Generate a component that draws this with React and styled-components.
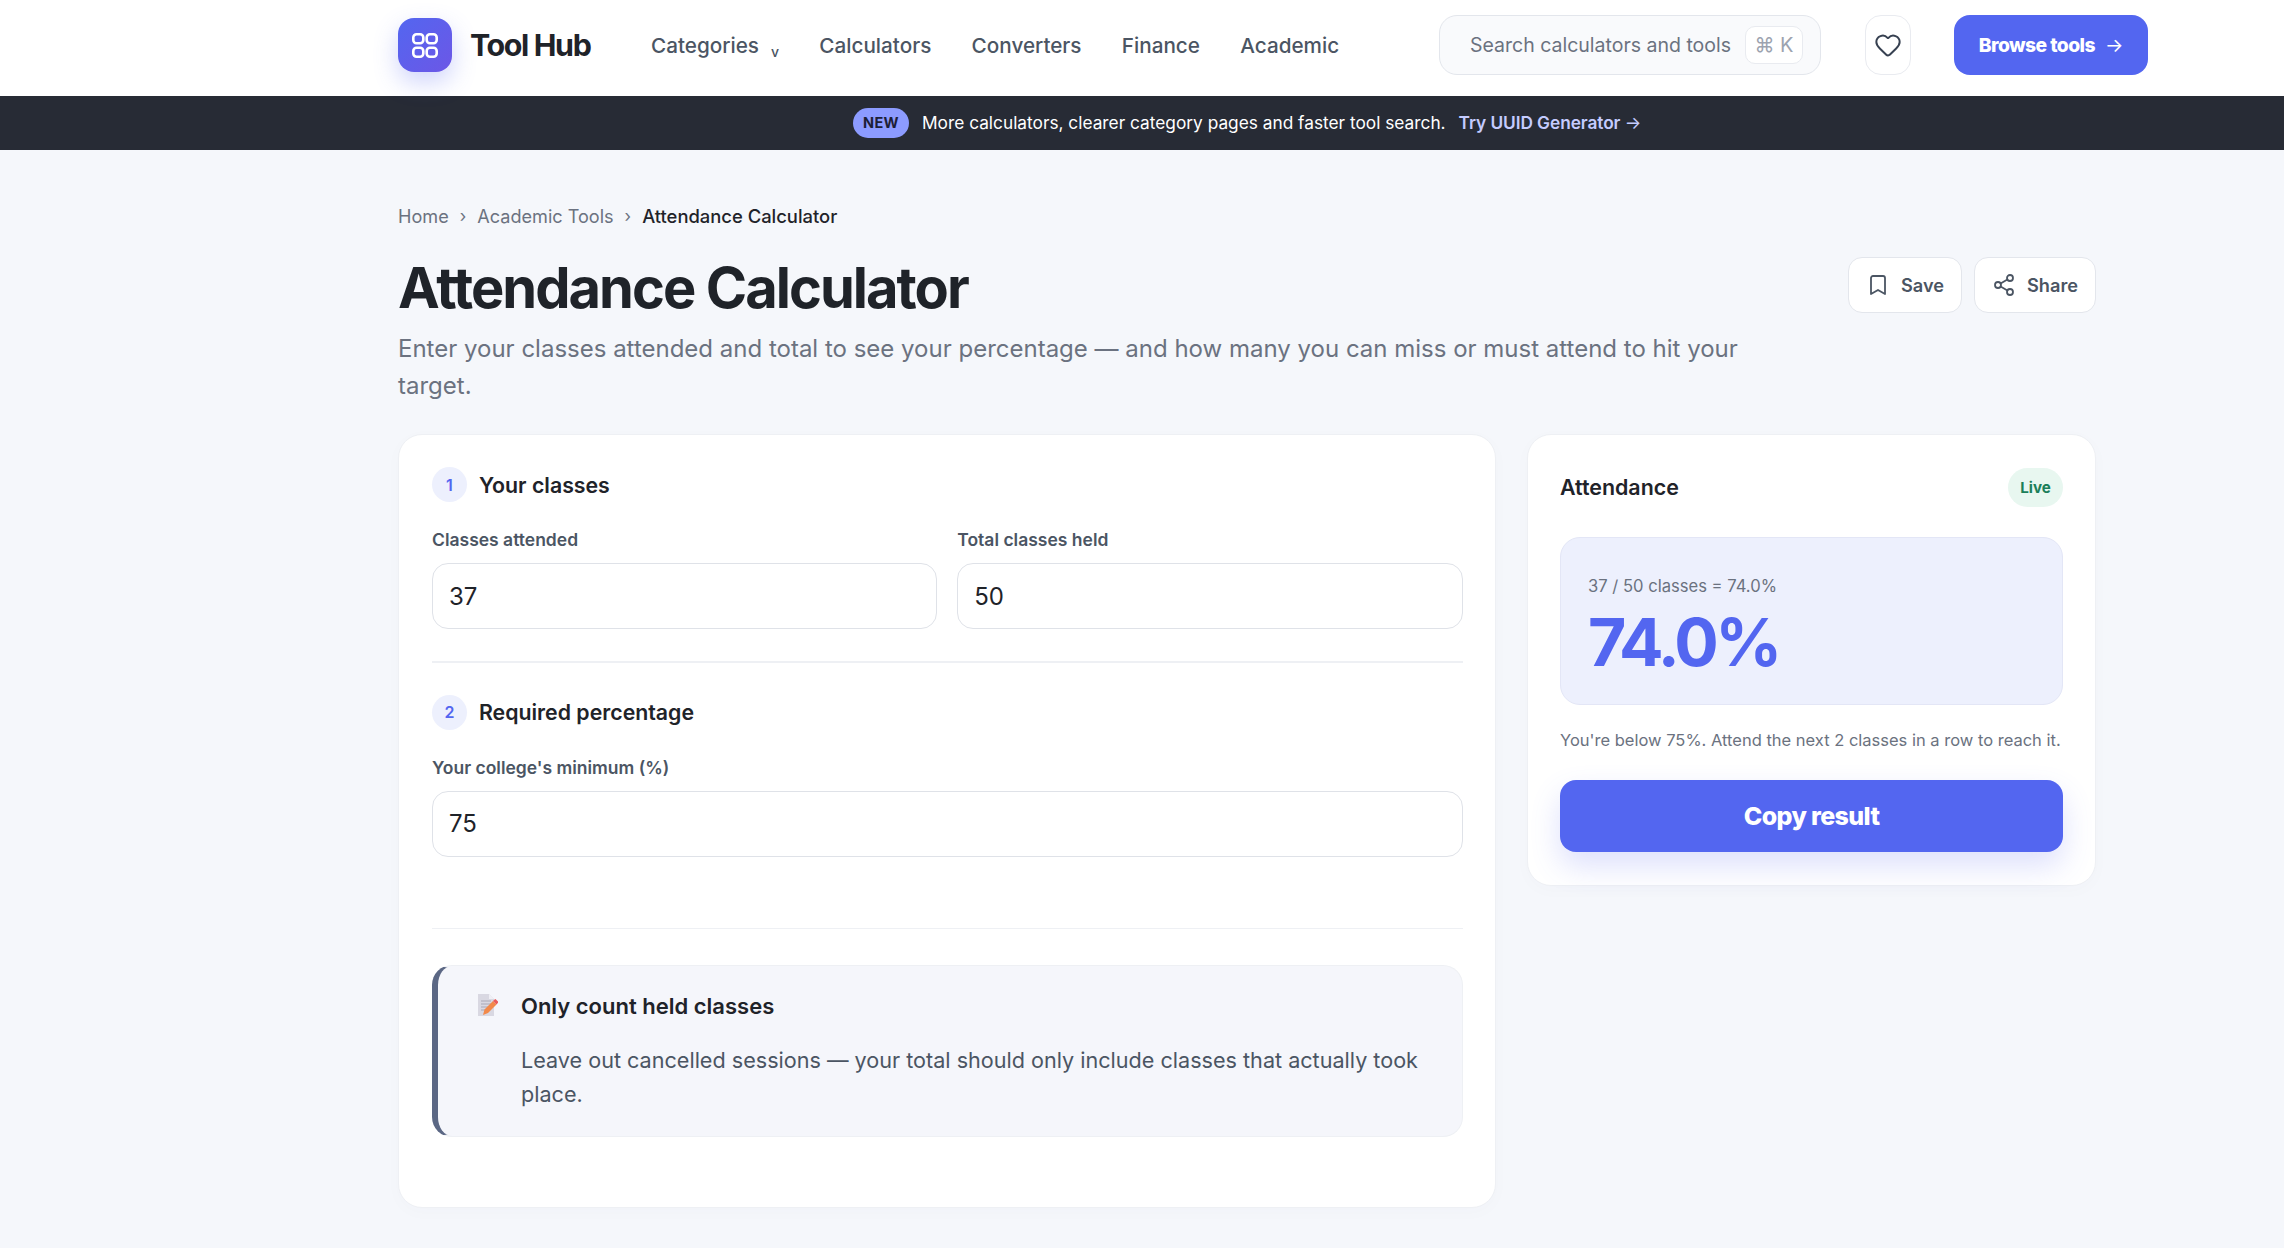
import React from 'react';
import styled, { createGlobalStyle } from 'styled-components';
import { Heart, Bookmark, Share2 } from 'lucide-react';

const GlobalStyle = createGlobalStyle`
  * { box-sizing: border-box; }
  html, body { margin: 0; padding: 0; }
  body {
    background: #f5f7fb;
    color: #1f2329;
    font-family: Inter, "Noto Sans", sans-serif;
    -webkit-font-smoothing: antialiased;
  }
`;

const Header = styled.header`
  height: 96px;
  background: #fff;
  padding: 0 0 6px 398px;
  display: flex;
  align-items: center;
`;

const LogoMark = styled.div`
  width: 54px;
  height: 54px;
  border-radius: 16px;
  background: linear-gradient(135deg, #5366f0, #6c57e6);
  box-shadow: 0 10px 24px rgba(83, 102, 240, 0.28);
  display: flex;
  align-items: center;
  justify-content: center;
`;

const Brand = styled.div`
  margin-left: 18px;
  width: 181px;
  font-size: 30.4px;
  font-weight: 700;
  letter-spacing: -0.045em;
  color: #1f2329;
`;

const Nav = styled.nav`
  display: flex;
  align-items: center;
  gap: 40.3px;
  width: 788px;
`;

const NavLink = styled.a`
  font-size: 20.7px;
  font-weight: 500;
  color: #4b5563;
  white-space: nowrap;
`;

const Caret = styled.span`
  margin-left: 12px;
  font-size: 14px;
  position: relative;
  top: 4px;
`;

const Search = styled.div`
  width: 382px;
  height: 60px;
  border: 1.5px solid #e3e6ec;
  border-radius: 18px;
  background: #f9fafc;
  display: flex;
  align-items: center;
  justify-content: space-between;
  padding: 0 17px 0 30px;
`;

const SearchText = styled.span`
  font-size: 19.5px;
  color: #6b7280;
  white-space: nowrap;
`;

const Kbd = styled.span`
  width: 58px;
  height: 38px;
  flex-shrink: 0;
  border: 1.5px solid #e9ebf0;
  border-radius: 10px;
  background: #fff;
  color: #9ca3af;
  font-size: 20px;
  display: flex;
  align-items: center;
  justify-content: center;
  gap: 4px;
`;

const HeartButton = styled.button`
  width: 46px;
  height: 60px;
  margin-left: 44px;
  border: 1.5px solid #e9ebf0;
  border-radius: 16px;
  background: #fff;
  color: #374151;
  padding: 0;
  display: flex;
  align-items: center;
  justify-content: center;
`;

const BrowseButton = styled.button`
  width: 194px;
  height: 60px;
  margin-left: 43px;
  border: 0;
  border-radius: 16px;
  background: #5366f0;
  color: #fff;
  font-family: inherit;
  font-size: 19.3px;
  font-weight: 800;
  letter-spacing: -0.03em;
  white-space: nowrap;
  span { margin-left: 10px; font-weight: 400; letter-spacing: 0; }
`;

const Banner = styled.div`
  height: 54px;
  background: #272b35;
  padding: 0 0 1px 853px;
  display: flex;
  align-items: center;
  color: #fff;
  font-size: 17.3px;
  white-space: nowrap;
`;

const NewPill = styled.span`
  width: 56px;
  height: 30px;
  border-radius: 15px;
  background: #8c9bff;
  color: #1c2036;
  font-size: 14.5px;
  font-weight: 700;
  letter-spacing: 0.03em;
  display: flex;
  align-items: center;
  justify-content: center;
  margin-right: 13px;
`;

const BannerLink = styled.a`
  margin-left: 13px;
  color: #c4cbff;
  font-weight: 600;
  letter-spacing: -0.004em;
  span { font-weight: 400; }
`;

const Main = styled.main`
  width: 1698px;
  margin-left: 398px;
  padding: 52px 0 42px;
`;

const Breadcrumb = styled.div`
  display: flex;
  align-items: center;
  height: 28px;
  font-size: 18.1px;
  color: #6b7280;
`;

const Sep = styled.span`
  margin: 0 11px;
  font-size: 17px;
`;

const Current = styled.span`
  color: #1f2329;
  font-weight: 500;
  font-size: 18.4px;
`;

const TitleRow = styled.div`
  display: flex;
  justify-content: space-between;
  align-items: flex-start;
  margin-top: 26px;
`;

const Title = styled.h1`
  margin: 0;
  font-size: 56px;
  line-height: 64px;
  font-weight: 700;
  letter-spacing: -0.035em;
  color: #1f2329;
`;

const Actions = styled.div`
  display: flex;
  gap: 12px;
  margin-top: 1px;
`;

const ActionButton = styled.button`
  width: ${p => p.$w}px;
  height: 56px;
  border: 1.5px solid #e3e6ec;
  border-radius: 14px;
  background: #fff;
  color: #4b5563;
  font-family: inherit;
  font-size: 18.2px;
  font-weight: 600;
  display: flex;
  align-items: center;
  justify-content: center;
  gap: 11px;
`;

const Subtitle = styled.p`
  margin: 10px 0 30px;
  max-width: 1380px;
  font-size: 24px;
  line-height: 37px;
  color: #6b7280;
`;

const Columns = styled.div`
  display: grid;
  grid-template-columns: 1098px 569px;
  gap: 31px;
  align-items: start;
`;

const Card = styled.section`
  background: #fff;
  border: 1.5px solid #eef0f4;
  border-radius: 24px;
  padding: 32px 32.5px 32px 33px;
  box-shadow: 0 4px 18px rgba(31, 41, 80, 0.02);
`;

const SideCard = styled(Card)`
  padding: 33px 32px 33px;
`;

const StepHead = styled.div`
  display: flex;
  align-items: center;
  gap: 12px;
  height: 35px;
`;

const StepNum = styled.span`
  width: 35px;
  height: 35px;
  border-radius: 50%;
  background: #edf0fd;
  color: #5366f0;
  font-size: 16px;
  font-weight: 600;
  display: flex;
  align-items: center;
  justify-content: center;
`;

const StepTitle = styled.h2`
  margin: 0;
  font-size: 21.3px;
  font-weight: 600;
  color: #1f2329;
`;

const Fields = styled.div`
  display: grid;
  grid-template-columns: ${p => (p.$cols === 2 ? '1fr 1fr' : '1fr')};
  gap: 20px;
  margin-top: 25px;
`;

const Label = styled.label`
  display: block;
  font-size: 17.5px;
  line-height: 26px;
  font-weight: 600;
  color: #4b5563;
  margin-bottom: 10px;
`;

const Input = styled.input`
  display: block;
  width: 100%;
  height: 66px;
  border: 1.5px solid #dfe2e8;
  border-radius: 16px;
  background: #fff;
  padding: 0 16px;
  font-family: inherit;
  font-size: 24px;
  color: #1f2329;
  outline: none;
`;

const Divider = styled.hr`
  border: 0;
  height: 1.5px;
  background: #eef0f4;
  margin: ${p => p.$top}px 0 ${p => p.$bottom}px;
`;

const Note = styled.div`
  height: 172px;
  background: #f5f6fb;
  border: 1.5px solid #eef0f4;
  border-left: 6px solid #5b6784;
  border-radius: 20px;
  padding: 24px 24px 0 40px;
  margin-bottom: 38px;
  display: grid;
  grid-template-columns: 20px 1fr;
  grid-template-rows: auto 1fr;
  column-gap: 23px;
`;

const NoteTitle = styled.div`
  font-size: 22px;
  line-height: 32px;
  font-weight: 600;
  color: #1f2329;
`;

const NoteBody = styled.p`
  grid-column: 2;
  margin: 22px 0 0;
  font-size: 21.6px;
  line-height: 33.5px;
  color: #4b5563;
`;

const CardHead = styled.div`
  display: flex;
  justify-content: space-between;
  align-items: center;
  height: 39px;
`;

const CardTitle = styled.h3`
  margin: 0 0 2px;
  font-size: 21.4px;
  font-weight: 600;
  color: #1f2329;
`;

const LivePill = styled.span`
  width: 55px;
  height: 39px;
  border-radius: 20px;
  background: #e8f7f0;
  color: #1b7f5a;
  font-size: 15.2px;
  font-weight: 700;
  display: flex;
  align-items: center;
  justify-content: center;
`;

const ResultBox = styled.div`
  height: 168px;
  margin-top: 30px;
  padding: 35px 27px 0;
  background: #edf0fd;
  border: 1.5px solid #e3e6f6;
  border-radius: 20px;
`;

const ResultFormula = styled.div`
  font-size: 16.6px;
  line-height: 26px;
  color: #6b7280;
`;

const ResultValue = styled.div`
  margin-top: 7px;
  font-size: 66px;
  line-height: 72px;
  font-weight: 700;
  letter-spacing: -0.054em;
  color: #5366f0;
`;

const ResultHint = styled.p`
  margin: 22px 0 27px;
  font-size: 16.5px;
  line-height: 26px;
  color: #6b7280;
  white-space: nowrap;
`;

const CopyButton = styled.button`
  display: block;
  width: 100%;
  height: 72px;
  border: 0;
  border-radius: 16px;
  background: #5366f0;
  color: #fff;
  font-family: inherit;
  font-size: 25px;
  font-weight: 800;
  letter-spacing: -0.025em;
  box-shadow: 0 14px 30px rgba(83, 102, 240, 0.2);
`;

function LogoIcon() {
  return (
    <svg width="28" height="27" viewBox="0 0 28 27" fill="none" stroke="#fff" strokeWidth="2.6">
      <rect x="2.3" y="2.3" width="10" height="9" rx="3.2" />
      <rect x="15.7" y="2.3" width="10" height="9" rx="3.2" />
      <rect x="2.3" y="15.7" width="10" height="9" rx="3.2" />
      <rect x="15.7" y="15.7" width="10" height="9" rx="3.2" />
    </svg>
  );
}

function MemoIcon() {
  return (
    <svg width="20" height="22" viewBox="0 0 20 22" style={{ marginTop: 4 }}>
      <path d="M0 0h11l5 5v17H0z" fill="#d9d8e2" />
      <path d="M11 0l5 5h-5z" fill="#f0eff5" />
      <path d="M3 7h10M3 10h10M3 13h7M3 16h4" stroke="#a9a8b6" strokeWidth="1" />
      <path d="M5 21l1.5-5.5L15 7l3.5 3.5-8.5 8.5z" fill="#f2894a" />
      <path d="M15 7l1.6-1.6a1 1 0 0 1 1.4 0l2 2a1 1 0 0 1 0 1.4L18.5 10.5z" fill="#ea5b5b" />
    </svg>
  );
}

export default function App() {
  return (
    <>
      <GlobalStyle />
      <Header>
        <LogoMark>
          <LogoIcon />
        </LogoMark>
        <Brand>Tool Hub</Brand>
        <Nav>
          <NavLink>
            Categories<Caret>v</Caret>
          </NavLink>
          <NavLink>Calculators</NavLink>
          <NavLink>Converters</NavLink>
          <NavLink>Finance</NavLink>
          <NavLink>Academic</NavLink>
        </Nav>
        <Search>
          <SearchText>Search calculators and tools</SearchText>
          <Kbd>⌘ K</Kbd>
        </Search>
        <HeartButton>
          <Heart size={28} strokeWidth={1.7} />
        </HeartButton>
        <BrowseButton>
          Browse tools<span>→</span>
        </BrowseButton>
      </Header>
      <Banner>
        <NewPill>NEW</NewPill>
        More calculators, clearer category pages and faster tool search.
        <BannerLink>
          Try UUID Generator <span>→</span>
        </BannerLink>
      </Banner>
      <Main>
        <Breadcrumb>
          Home<Sep>›</Sep>Academic Tools<Sep>›</Sep>
          <Current>Attendance Calculator</Current>
        </Breadcrumb>
        <TitleRow>
          <Title>Attendance Calculator</Title>
          <Actions>
            <ActionButton $w={114}>
              <Bookmark size={24} strokeWidth={1.8} />
              Save
            </ActionButton>
            <ActionButton $w={122}>
              <Share2 size={24} strokeWidth={1.8} />
              Share
            </ActionButton>
          </Actions>
        </TitleRow>
        <Subtitle>
          Enter your classes attended and total to see your percentage — and how many you can miss or must attend to hit
          your target.
        </Subtitle>
        <Columns>
          <Card>
            <StepHead>
              <StepNum>1</StepNum>
              <StepTitle>Your classes</StepTitle>
            </StepHead>
            <Fields $cols={2}>
              <div>
                <Label>Classes attended</Label>
                <Input defaultValue="37" />
              </div>
              <div>
                <Label>Total classes held</Label>
                <Input defaultValue="50" />
              </div>
            </Fields>
            <Divider $top={32} $bottom={32} />
            <StepHead>
              <StepNum>2</StepNum>
              <StepTitle>Required percentage</StepTitle>
            </StepHead>
            <Fields>
              <div>
                <Label>Your college's minimum (%)</Label>
                <Input defaultValue="75" />
              </div>
            </Fields>
            <Divider $top={71} $bottom={36} />
            <Note>
              <MemoIcon />
              <NoteTitle>Only count held classes</NoteTitle>
              <NoteBody>
                Leave out cancelled sessions — your total should only include classes that actually took place.
              </NoteBody>
            </Note>
          </Card>
          <SideCard>
            <CardHead>
              <CardTitle>Attendance</CardTitle>
              <LivePill>Live</LivePill>
            </CardHead>
            <ResultBox>
              <ResultFormula>37 / 50 classes = 74.0%</ResultFormula>
              <ResultValue>74.0%</ResultValue>
            </ResultBox>
            <ResultHint>You're below 75%. Attend the next 2 classes in a row to reach it.</ResultHint>
            <CopyButton>Copy result</CopyButton>
          </SideCard>
        </Columns>
      </Main>
    </>
  );
}
